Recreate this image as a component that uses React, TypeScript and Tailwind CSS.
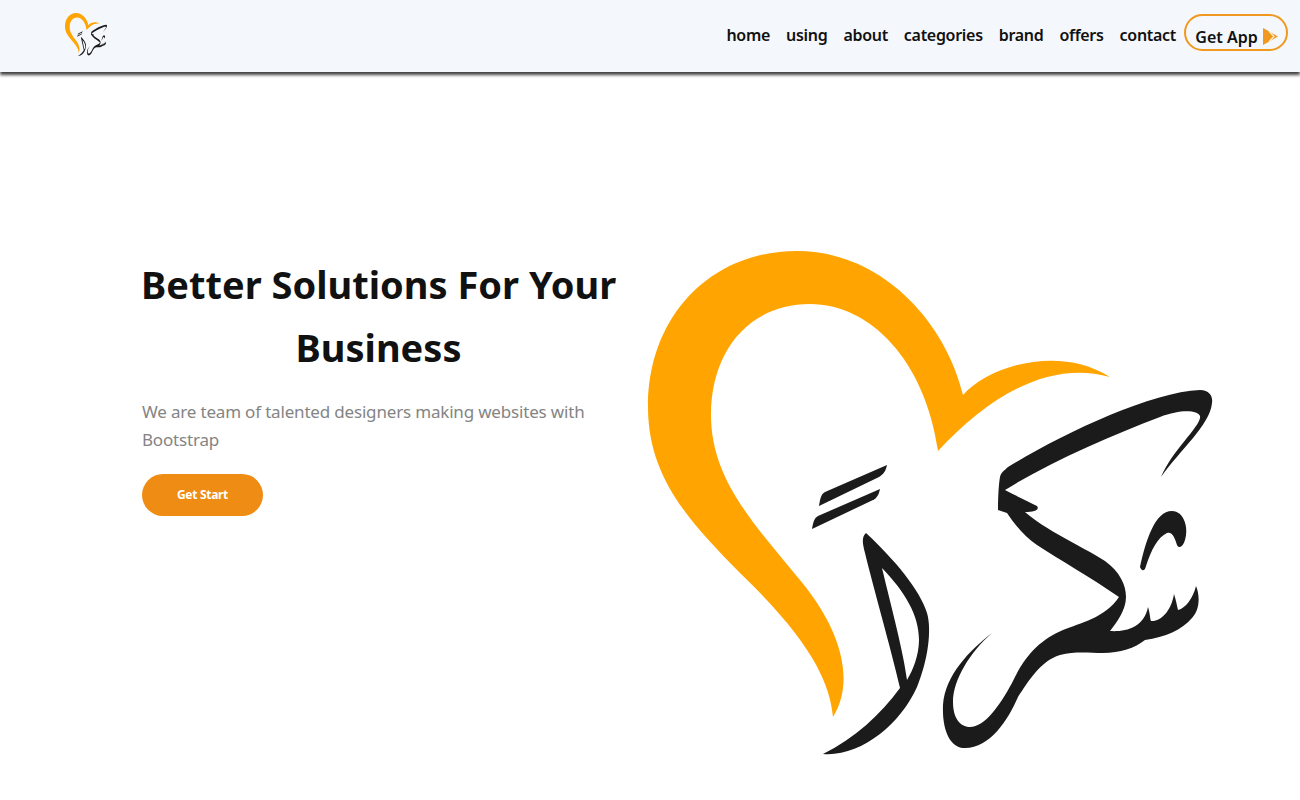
import React from "react";

// artwork traced in page coordinates, so the big logo sits in viewBox 640 240 580 530
const heart =
  "M833 717C830 682 810 640 740 573C690 522 648 478 648 407C648 315 712 251 797 251C880 251 945 320 963 395C990 365 1060 345 1110 377C1050 360 990 395 938 451C925 360 870 304 810 304C750 304 711 350 711 415C711 480 755 525 800 580C840 628 856 680 833 717Z";
const dashOne = "M887 465L825 492C821 494 820 499 819 506L879 477C884 474 886 470 887 465Z";
const dashTwo = "M880 489L818 516C814 518 813 523 812 529L873 500C877 498 879 494 880 489Z";
const lamAlif =
  "M866 533C861 537 863 545 865 553C874 590 890 645 900 688C880 715 855 738 823 754C860 757 900 725 917 687C928 660 932 630 927 613C920 590 895 560 866 533ZM882 568C905 592 919 615 919 640C919 655 913 670 907 680C903 650 892 610 882 568Z";
const word =
  "M1161 477C1172 450 1202 425 1200 416C1198 410 1180 409 1160 417C1110 436 1050 462 1005 490C1018 497 1030 502 1037 506C1040 510 1034 512 1025 512C1045 530 1080 545 1105 561C1120 572 1126 585 1126 597C1126 610 1117 622 1110 631C1125 632 1144 628 1148 607C1150 613 1150 619 1151 621C1160 622 1171 612 1174 594C1176 600 1177 606 1178 610C1186 608 1193 598 1196 586C1200 595 1200 610 1192 618C1182 630 1165 637 1145 640C1135 648 1120 653 1103 653C1090 653 1075 651 1060 655C1040 661 1028 682 1018 697C1008 720 990 748 965 748C950 748 942 730 943 705C945 675 970 650 992 633C970 652 953 680 953 702C953 718 960 727 970 727C985 727 1000 705 1012 683C1025 655 1040 640 1063 630C1080 623 1105 618 1119 597C1090 577 1060 560 1037 545C1025 537 1015 525 1007 513L998 510C998 495 999 482 1000 477C1001 472 1005 470 1008 467C1060 435 1150 392 1200 390C1210 390 1213 397 1212 403C1210 425 1180 450 1161 477Z";
const shinMark =
  "M1140 567C1142 572 1145 571 1146 566C1151 550 1158 537 1167 533C1172 531 1175 538 1177 545C1179 549 1183 547 1185 540C1189 528 1184 511 1172 511C1155 511 1146 540 1140 567Z";

const ShukranLogo = ({ viewBox, className, stretch }: { viewBox: string; className: string; stretch?: boolean }) => (
  <svg viewBox={viewBox} className={className} preserveAspectRatio={stretch ? "none" : "xMidYMid meet"}>
    <path d={heart} fill="#ffa400" />
    <g fill="#1b1b1b">
      <path d={dashOne} />
      <path d={dashTwo} />
      <path d={lamAlif} fillRule="evenodd" />
      <path d={word} />
      <path d={shinMark} />
    </g>
  </svg>
);

const links = ["home", "using", "about", "categories", "brand", "offers", "contact"];

export default function App() {
  return (
    <div className="min-h-screen bg-white font-['Noto_Sans',sans-serif] text-[#111] overflow-hidden">
      {/* Header */}
      <header className="h-[72px] bg-[#f4f7fb] flex items-center justify-between pl-[65px] pr-3 shadow-[0_3px_3px_rgba(0,0,0,0.75)]">
        <ShukranLogo viewBox="648 251 564 504" className="w-[42px] h-[43px] mb-[3px] shrink-0" stretch />
        <nav className="flex items-center gap-2">
          <ul className="flex items-center gap-4 mb-[2px] text-[16px] tracking-[-0.3px] font-semibold">
            {links.map((link) => (
              <li key={link}>
                <a href="#">{link}</a>
              </li>
            ))}
          </ul>
          <button className="h-[37px] w-[104px] mb-[8px] border-2 border-[#f0981f] rounded-full flex items-center justify-center gap-[5px] text-[16px] font-semibold pt-[9px] pl-[1px]">
            Get App
            <svg viewBox="0 0 15 17" className="w-[15px] h-[17px]">
              <path d="M0 0L15 8.5L0 17Z" fill="#f0981f" />
              <path d="M6 3.4L11 8.5L6 13.6" fill="none" stroke="#fff3dc" strokeWidth="1.2" />
            </svg>
          </button>
        </nav>
      </header>

      {/* Hero */}
      <main className="flex items-start pl-[141px]">
        <section className="w-[475px] mr-6 pt-[181px] shrink-0">
          <h1 className="text-[38px] leading-[63px] font-bold text-center whitespace-nowrap">
            Better Solutions For Your
            <br />
            Business
          </h1>
          <p className="mt-[19px] ml-px text-[17px] leading-[28px] tracking-[-0.18px] text-[#848484] w-[460px]">
            We are team of talented designers making websites with Bootstrap
          </p>
          <button className="mt-[20px] ml-px w-[121px] h-[42px] rounded-full bg-[#ee8c14] text-white text-[12px] tracking-[-0.3px] font-bold">
            Get Start
          </button>
        </section>
        <ShukranLogo viewBox="640 240 580 530" className="w-[580px] h-[530px] mt-[168px] shrink-0" />
      </main>
    </div>
  );
}
